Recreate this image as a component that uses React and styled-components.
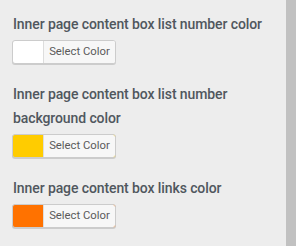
import styled, { createGlobalStyle } from "styled-components";

const GlobalStyle = createGlobalStyle`
    html, body {
        margin: 0;
        padding: 0;
        background: #ededed;
    }
    body {
        font-family: Roboto, "Liberation Sans", sans-serif;
    }
`;

const controls = [
    { label: "Inner page content box list number color", color: "#ffffff" },
    { label: "Inner page content box list number background color", color: "#ffcc00" },
    { label: "Inner page content box links color", color: "#ff7200" },
];

export default function App() {
    return (
        <>
            <GlobalStyle />
            <Page>
                <Panel>
                    {controls.map((c) => (
                        <Control key={c.label}>
                            <Title>{c.label}</Title>
                            <ColorButton $swatch={c.color}>
                                <ButtonText>Select Color</ButtonText>
                            </ColorButton>
                        </Control>
                    ))}
                </Panel>
                <Scrollbar />
            </Page>
        </>
    );
}

const Page = styled.div`
    width: 296px;
    height: 246px;
    display: flex;
    overflow: hidden;
`;

const Panel = styled.div`
    flex: 1;
    padding: 12px 12px 0 12px;
    display: flex;
    flex-direction: column;
    gap: 18px;
`;

const Control = styled.div`
    display: flex;
    flex-direction: column;
    align-items: flex-start;
`;

const Title = styled.div`
    font-size: 14px;
    line-height: 24px;
    font-weight: 500;
    letter-spacing: -0.1px;
    color: #50575e;
    margin: 0 0 4px 1px;
    max-width: 262px;
`;

const ColorButton = styled.div`
    box-sizing: border-box;
    height: 24px;
    width: 104px;
    display: flex;
    justify-content: flex-end;
    border: 1px solid #cccccc;
    border-radius: 3px;
    background: ${(p) => p.$swatch};
    box-shadow: 0 1px 0 #cccccc;
    overflow: hidden;
`;

const ButtonText = styled.span`
    box-sizing: border-box;
    width: 72px;
    height: 22px;
    line-height: 22px;
    text-align: center;
    font-size: 11.3px;
    color: #5a5a5a;
    background: #f7f7f7;
    border-left: 1px solid #dddddd;
`;

const Scrollbar = styled.div`
    width: 10px;
    height: 100%;
    background: #c1c1c1;
`;
